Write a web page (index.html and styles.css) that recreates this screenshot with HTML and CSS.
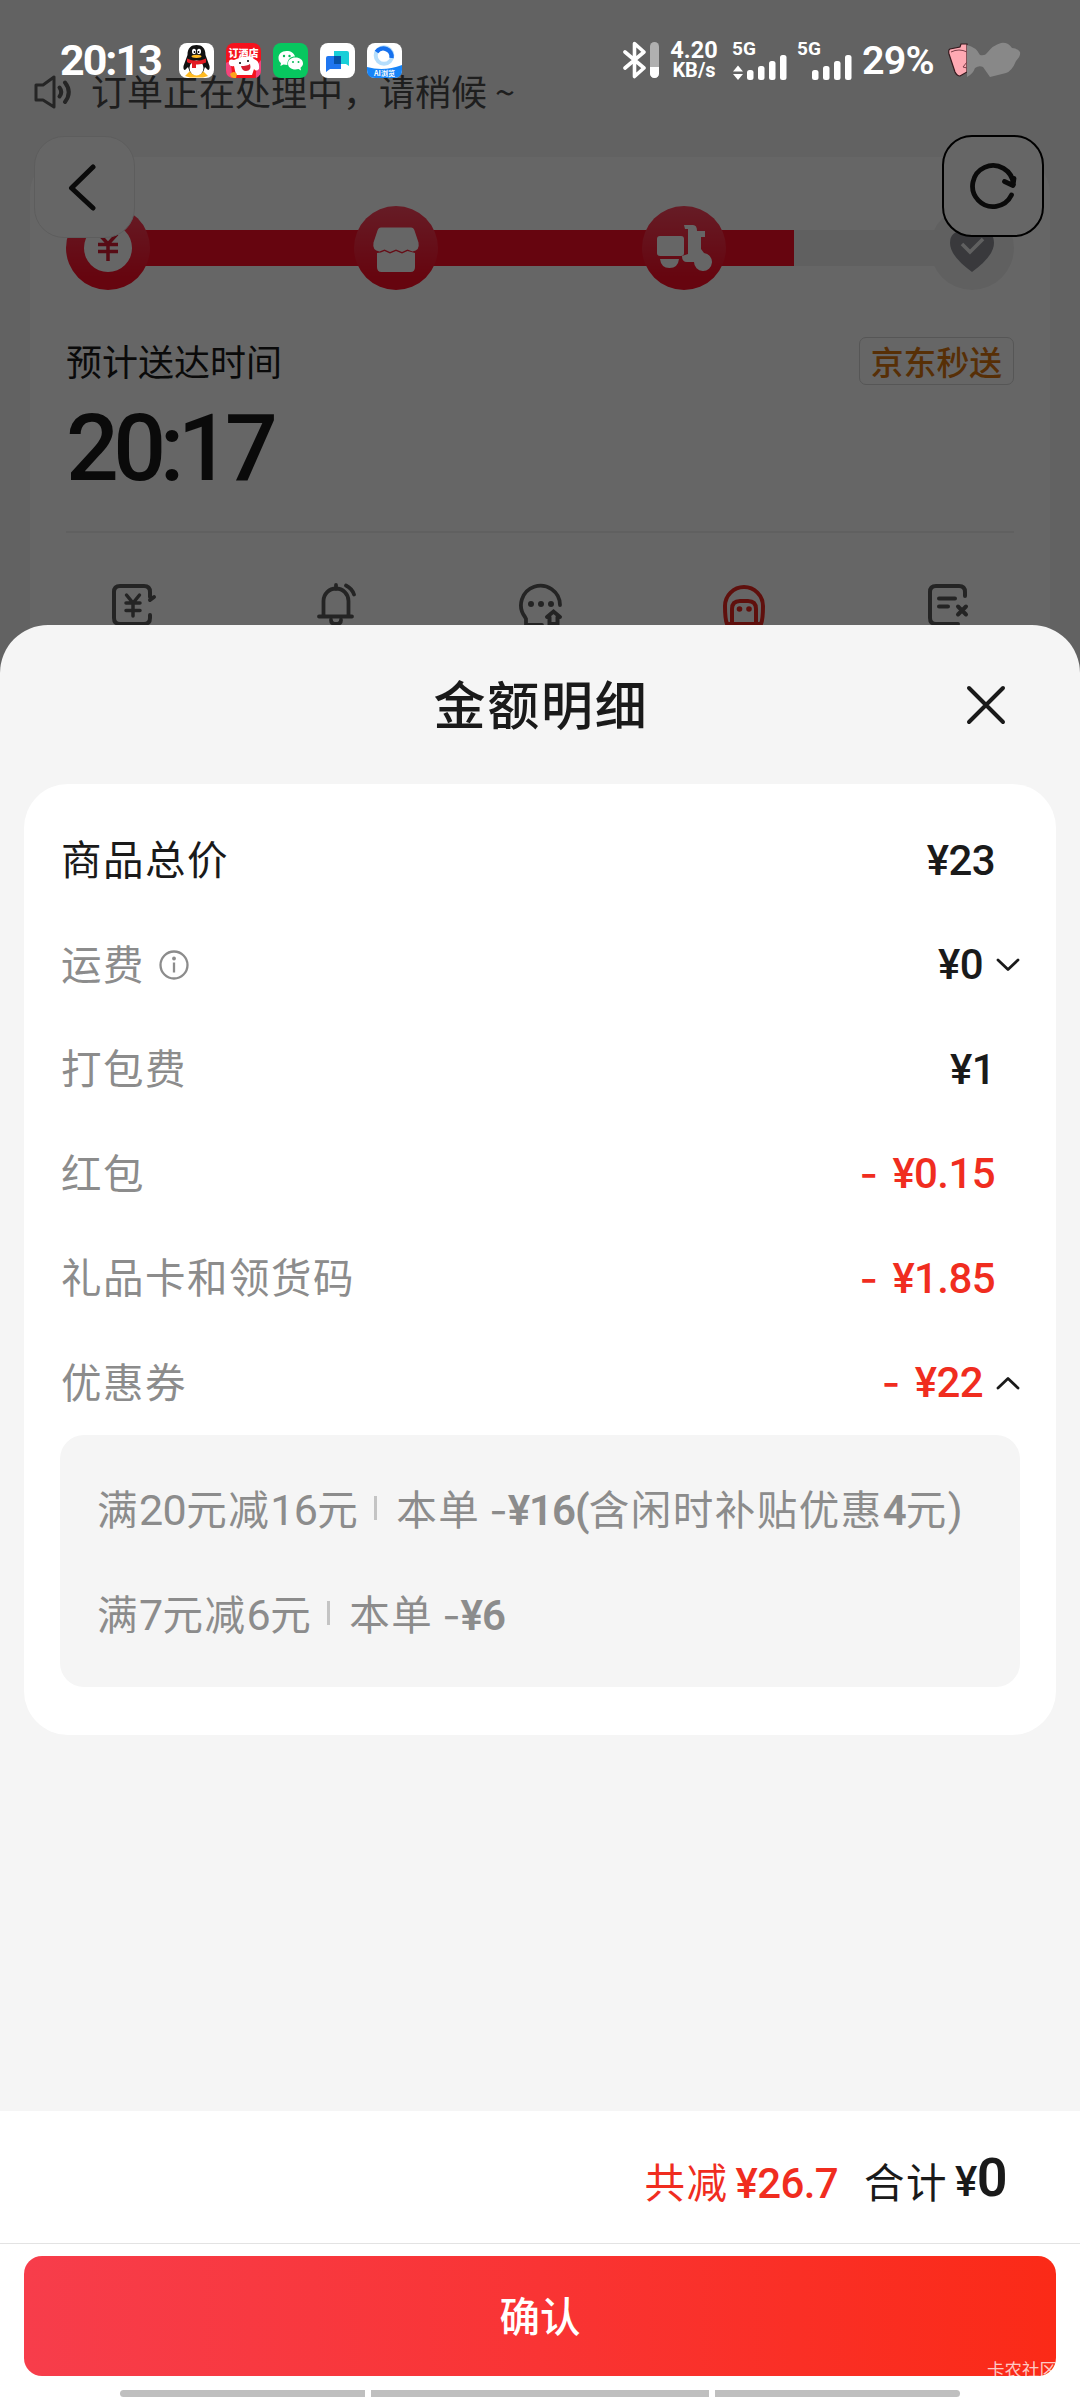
FILE: index.html
```html
<!DOCTYPE html>
<html lang="zh-CN">
<head>
<meta charset="utf-8">
<title>金额明细</title>
<link rel="stylesheet" href="styles.css">
</head>
<body>
<div class="screen">

  <main class="order">
    <div class="notice">
      <svg class="notice-icon" width="40" height="34" viewBox="0 0 40 34" fill="none" stroke="#5c5c5c" stroke-width="3" stroke-linejoin="round" stroke-linecap="round"><path d="M2 10h7l11-8v30l-11-7H2z"/><path d="M25.500 12.500q3.500 4.500 0 9" stroke-width="4"/><path d="M31 7.500q7.500 9.500 0 19.500" stroke-width="4"/></svg>
      <span>订单正在处理中，请稍候 ~</span>
    </div>

    <section class="order-card">
      <div class="steps">
        <div class="step">
          <svg width="84" height="84" viewBox="0 0 84 84"><circle cx="42" cy="42" r="24" fill="#fff"/><path d="M33 28l9 10 9-10M32 38.500h20M32 45.500h20M42 38v17" fill="none" stroke="#d91c33" stroke-width="3.500"/></svg>
        </div>
        <div class="step">
          <svg width="84" height="84" viewBox="0 0 84 84" fill="#fff"><path d="M27 21.500h30q2.500 0 3.500 3l4 12q1.500 8-6 9l-5-2-5.500 2.500-6-2.500-6 2.500-5.500-2.500-5 2q-7.500-1-6-9l4-12q1-3 3.500-3z"/><path d="M23 47q4 0 7.500-2l5.500 2.500 6-2.500 6 2.500 5.500-2.500 7.500 2v14q0 5-4.500 5H27.500q-4.500 0-4.500-5z"/></svg>
        </div>
        <div class="step">
          <svg width="84" height="84" viewBox="0 0 84 84" fill="#fff"><rect x="15" y="30" width="27" height="20" rx="3"/><path d="M18 53h19q-1 9-9.500 9T18 53z"/><path d="M42 19h9q4 0 4 6h8v6h-4v12l3 4a9 9 0 1 1-10 9H45q-5 0-5-6l6-2V23h-3z"/></svg>
        </div>
        <div class="step step-pending">
          <svg width="84" height="84" viewBox="0 0 84 84"><path d="M42 66Q20 50 20 37q0-12 13-12h18q13 0 13 12 0 13-22 29z" fill="#8e9097"/><path d="M32 38l8 8 13-13" fill="none" stroke="#f1f1f1" stroke-width="3.500"/></svg>
        </div>
      </div>

      <div class="eta-head">
        <span class="eta-label">预计送达时间</span>
        <span class="eta-badge">京东秒送</span>
      </div>
      <div class="eta-time">20<span class="colon">:</span>17</div>

      <div class="actions">
        <svg width="48" height="46" viewBox="0 0 48 46" fill="none" stroke="#5b5b5b" stroke-width="4" stroke-linecap="round"><path d="M41 14V9q0-6-6-6H11Q5 3 5 9v26q0 6 6 6h24q6 0 6-6v-3"/><path d="M41 17l4-3" /><path d="M17.500 12l6.500 8 6.500-8M17 20h14M17 27.500h14M24 20v13" stroke-width="3.500"/></svg>
        <svg width="48" height="46" viewBox="0 0 48 46" fill="none" stroke="#5b5b5b" stroke-width="3.800" stroke-linecap="round"><path d="M6 33.500h33M10.500 33V18a12 12 0 0 1 25 0v15M23 2v4M18 37q0 4 5 4t5-4M33 2.500q6 3 8 9"/></svg>
        <svg width="48" height="46" viewBox="0 0 48 46" fill="none" stroke="#5b5b5b" stroke-width="3.800" stroke-linecap="round"><path d="M43 22A19.500 19.500 0 1 0 8 34l1 2v6h16"/><path d="M30 34l6.500-5.500L43 34M32.500 34v7h8v-7" stroke-width="4"/><g fill="#5b5b5b" stroke="none"><circle cx="14" cy="21" r="3"/><circle cx="24" cy="21" r="3"/><circle cx="34" cy="21" r="3"/></g></svg>
        <svg width="48" height="46" viewBox="0 0 48 46" fill="none" stroke="#ee2a22" stroke-width="4" stroke-linecap="round"><path d="M6 41Q4 36 4 23a19 19 0 0 1 38 0q0 13-2 18z"/><path d="M11 40V26q0-8 8-8h8q8 0 8 8v14"/><g fill="#ee2a22" stroke="none"><circle cx="18.500" cy="26" r="2.800"/><circle cx="28" cy="26" r="2.800"/></g></svg>
        <svg width="48" height="46" viewBox="0 0 48 46" fill="none" stroke="#5b5b5b" stroke-width="4" stroke-linecap="round"><path d="M40 13V9q0-6-6-6H11Q5 3 5 9v26q0 6 6 6h22"/><path d="M14 15.500h16M14 23.500h9M33 23.500l8 8M41 23.500l-8 8"/></svg>
      </div>
    </section>
  </main>

  <div class="nav-button nav-back">
    <svg width="30" height="50" viewBox="0 0 30 50" fill="none" stroke="#1a1a1a" stroke-width="5" stroke-linecap="round" stroke-linejoin="round"><path d="M25 5L3.500 26 25 46"/></svg>
  </div>
  <div class="nav-button nav-refresh">
    <svg width="50" height="50" viewBox="0 0 50 50" fill="none" stroke="#1a1a1a" stroke-width="4.800" stroke-linecap="round" stroke-linejoin="round"><path d="M43.500 34A20.500 20.500 0 1 1 45.500 23.500M36.500 20.500l8.500 4 1-7"/></svg>
  </div>

  <div class="mask"></div>

  <header class="status">
    <div class="status-left">
      <span class="clock">20:13</span>
      <svg width="35" height="35" viewBox="0 0 35 35"><rect width="35" height="35" rx="8" fill="#fff"/><path d="M6 33l5-5h13l5 5-5 1.500H11z" fill="#fb2"/><path d="M8.500 12C8.500 5 12 2 17.500 2s9 3 9 10l4 11q.5 4-1.500 4l-3-3q-2 8-8.500 8T9 24l-3 3q-2 0-1.500-4z" fill="#111"/><ellipse cx="17.500" cy="25" rx="7" ry="7.500" fill="#fff"/><path d="M8 15.500q9.500 4.500 19 0v4q-5 2.500-10 2v3.500h-4v-4.500q-4-.5-5-1.500z" fill="#e31b23"/><ellipse cx="15" cy="8.500" rx="2" ry="2.800" fill="#fff"/><ellipse cx="20" cy="8.500" rx="2" ry="2.800" fill="#fff"/><circle cx="15.500" cy="9" r=".9"/><circle cx="19.500" cy="9" r=".9"/><ellipse cx="17.500" cy="13.300" rx="5" ry="1.600" fill="#fb2"/></svg>
      <svg width="35" height="35" viewBox="0 0 35 35"><rect width="35" height="35" rx="8" fill="#f5121d"/><path d="M0 20q6-5 6 15H8q-8 0-8-8zM35 17q-6 6-5 18 5-2 5-8z" fill="#f2457d"/><path d="M3 21q-1-6 5-4l5-2q3-2 8-1 4-2 7 2 6 2 5 10-3 3-5 0l-2 6H10L8 23q-4 1-5-2z" fill="#fff"/><text x="17.500" y="14" class="tile-promo" text-anchor="middle">订酒店</text><path d="M15 23q6 0 9-2 2 7-4 7-4 0-5-5z" fill="#d51f31"/><circle cx="14" cy="20" r="1"/><circle cx="22" cy="18" r="1"/><path d="M4 31q4-4 7 0l-1 4H8q-3 0-4-4z" fill="#fca51c"/></svg>
      <svg width="35" height="35" viewBox="0 0 35 35"><rect width="35" height="35" rx="8" fill="#07c75f"/><path d="M13.500 8C8.500 8 5.500 11 5.500 15c0 2.500 1 4 2.500 5l-.6 3 3-1.500 4 .5C14 16 18 13.500 22 13.500 21 10 18 8 13.500 8z" fill="#fff"/><path d="M22.500 14.500c-4.500 0-7.500 2.500-7.500 6s3 6 7.500 6l3-.6 2.500 1.600-.5-2.800c1.600-1 2.500-2.500 2.500-4.200 0-3.500-3-6-7.500-6z" fill="#fff"/><g fill="#07b857"><circle cx="11" cy="13" r="1.200"/><circle cx="16.500" cy="13" r="1.200"/><circle cx="20" cy="19" r="1"/><circle cx="25.500" cy="19" r="1"/></g></svg>
      <svg width="35" height="35" viewBox="0 0 35 35"><rect width="35" height="35" rx="8" fill="#fff"/><path d="M14 8h13q2 0 2 2v13l-3-2H14z" fill="#18cfd8"/><path d="M8 13h13v13H10l-4 3V15q0-2 2-2z" fill="#1f76f0"/><path d="M14 13h7v8h-7z" fill="#0752a8"/></svg>
      <svg width="35" height="35" viewBox="0 0 35 35"><rect width="35" height="35" rx="8" fill="#fff"/><path d="M0 24q17 5 35-2v5q0 8-8 8H8q-8 0-8-8z" fill="#1684f8"/><circle cx="17" cy="12.500" r="8.300" fill="none" stroke="#b5defc" stroke-width="4"/><path d="M9.500 9A8.300 8.300 0 0 1 24.500 15" fill="none" stroke="#1671ee" stroke-width="4.500"/><text x="17.500" y="33" class="tile-ai" text-anchor="middle">AI浏览</text></svg>
    </div>
    <div class="status-right">
      <svg width="38" height="38" viewBox="0 0 38 38"><path d="M3 11l19 16-9.500 8.500V2.500L22 11 3 27" fill="none" stroke="#fff" stroke-width="3.600" stroke-linejoin="round" stroke-linecap="round"/><rect x="28" y="1" width="9" height="36" rx="4.500" fill="#b0b0b0"/><path d="M28 26h9v6.500a4.500 4.500 0 0 1-9 0z" fill="#fff"/></svg>
      <div class="rate"><span>4.20</span><span>KB/s</span></div>
      <div class="signal">
        <span class="signal-label">5G</span>
        <svg width="56" height="26" viewBox="0 0 56 26" fill="#fff"><path d="M6 11.500l5 6H1zM6 26l-5-6h10z"/><rect x="15" y="16" width="6.500" height="10" rx="2.500"/><rect x="26" y="12" width="6.500" height="14" rx="2.500"/><rect x="37" y="7" width="6.500" height="19" rx="2.500"/><rect x="48" y="1" width="6.500" height="25" rx="2.500"/></svg>
      </div>
      <div class="signal">
        <span class="signal-label">5G</span>
        <svg width="56" height="26" viewBox="0 0 56 26" fill="#fff"><rect x="15" y="16" width="6.500" height="10" rx="2.500"/><rect x="26" y="12" width="6.500" height="14" rx="2.500"/><rect x="37" y="7" width="6.500" height="19" rx="2.500"/><rect x="48" y="1" width="6.500" height="25" rx="2.500"/></svg>
      </div>
      <span class="percent">29%</span>
      <svg class="battery" width="74" height="36" viewBox="0 0 74 36"><path d="M20 2L14 2l-1 3-10 2q-2 1-1 5l6 18q2 4 5 4l7-4z" fill="#ffa9b3" stroke="#33191d" stroke-width="1.200"/><path d="M4 10q8-4 16 0M20 20l-4 5 4 1" fill="none" stroke="#7c3f49" stroke-width="1"/><path d="M20 3q9 2 13 10 5 1 7-2 6-8 14-10 7-1 11 5 5 0 8 4 1 4-4 9-4 10-10 12l-16 4-7-10q-4-2-8 1-2 6-8 9z" fill="#888"/></svg>
    </div>
  </header>

  <section class="sheet">
    <div class="sheet-head">
      <h1>金额明细</h1>
      <svg class="close" width="44" height="44" viewBox="0 0 44 44" fill="none" stroke="#1a1a1a" stroke-width="4" stroke-linecap="round"><path d="M5 5l34 34M39 5L5 39"/></svg>
    </div>

    <div class="fees">
      <div class="row"><span class="name name-dark">商品总价</span><span class="price">¥23</span></div>
      <div class="row">
        <span class="name">运费</span>
        <svg class="info" width="30" height="30" viewBox="0 0 30 30" fill="none" stroke="#8c8c8c" stroke-width="2.300"><circle cx="15" cy="15" r="13.500"/><path d="M15 12.500v10"/><circle cx="15" cy="8.500" r="1.900" fill="#8c8c8c" stroke="none"/></svg>
        <span class="price">¥0</span>
        <svg class="chevron" width="24" height="14" viewBox="0 0 24 14" fill="none" stroke="#1a1a1a" stroke-width="2.800" stroke-linecap="round" stroke-linejoin="round"><path d="M2 2l10 9.500L22 2"/></svg>
      </div>
      <div class="row"><span class="name">打包费</span><span class="price">¥1</span></div>
      <div class="row"><span class="name">红包</span><span class="price price-off"><span class="minus">-</span>¥0.15</span></div>
      <div class="row"><span class="name">礼品卡和领货码</span><span class="price price-off"><span class="minus">-</span>¥1.85</span></div>
      <div class="row">
        <span class="name">优惠券</span><span class="price price-off"><span class="minus">-</span>¥22</span>
        <svg class="chevron" width="24" height="14" viewBox="0 0 24 14" fill="none" stroke="#1a1a1a" stroke-width="2.800" stroke-linecap="round" stroke-linejoin="round"><path d="M2 12l10-9.500L22 12"/></svg>
      </div>
      <div class="coupons">
        <div class="coupon"><span>满<span class="n">20</span>元减<span class="n">16</span>元</span><i class="bar"></i><span>本单</span><span class="cut"><span class="dash">-</span><b>¥16(</b>含闲时补贴优惠<b>4</b>元<span class="n">)</span></span></div>
        <div class="coupon"><span>满<span class="n">7</span>元减<span class="n">6</span>元</span><i class="bar"></i><span>本单</span><span class="cut"><span class="dash">-</span><b>¥6</b></span></div>
      </div>
    </div>

    <footer class="footer">
      <div class="totals">
        <span class="saved">共减</span><span class="saved saved-num">¥26.7</span>
        <span class="total">合计</span><span class="total-num">¥<b>0</b></span>
      </div>
      <div class="confirm-area">
        <button class="confirm">确认</button>
        <div class="home-bars"><i></i><i></i><i></i></div>
      </div>
    </footer>
  </section>

  <span class="watermark">卡农社区</span>
</div>
</body>
</html>
```

FILE: styles.css
```css
* { box-sizing: border-box; }

body {
  margin: 0;
  font-family: "Noto Sans CJK SC", sans-serif;
  color: #1a1a1a;
}

svg { display: block; flex: none; }
i { font-style: normal; }

.screen {
  position: relative;
  width: 1080px;
  height: 2400px;
  overflow: hidden;
  background: #f4f4f4;
}

/* order page under the mask */
.order { padding-top: 68px; }

.notice {
  display: flex;
  align-items: center;
  height: 48px;
  padding-left: 34px;
  gap: 17px;
  font-size: 36px;
  line-height: 48px;
  color: #4d4d4d;
  white-space: pre;
}

.notice span { padding-bottom: 4px; }

.order-card {
  margin: 41px 30px 0;
  height: 600px;
  padding: 49px 36px 0;
  border-radius: 36px;
  background: #fff;
}

.steps {
  display: flex;
  justify-content: space-between;
  height: 84px;
  background:
    linear-gradient(#ff0d26, #ff0d26) 42px 24px / 686px 36px no-repeat,
    linear-gradient(#f1f1f1, #f1f1f1) 42px 24px / 864px 36px no-repeat;
}

.step {
  width: 84px;
  height: 84px;
  border-radius: 50%;
  background: linear-gradient(#ff475f, #ff0d26 85%);
}

.step-pending { background: #f1f1f1; }

.eta-head {
  display: flex;
  justify-content: space-between;
  align-items: center;
  height: 48px;
  margin-top: 47px;
}

.eta-label { padding-bottom: 3px; font-size: 36px; line-height: 48px; }

.eta-badge {
  height: 48px;
  padding: 0 11px;
  border: 1px solid #d6d6d6;
  border-radius: 7px;
  font-size: 32.800px;
  font-weight: 500;
  line-height: 45px;
  color: #d9750f;
}

.eta-time {
  margin-top: 15px;
  height: 133px;
  padding-top: 3px;
  border-bottom: 2px solid #efefef;
  font: 500 93px/92px Roboto, sans-serif;
  letter-spacing: -5.500px;
}

.colon { margin: 0 -1px 0 -1px; }

.actions {
  display: flex;
  justify-content: space-between;
  padding: 50px 41px 0 43px;
}

.nav-button {
  position: absolute;
  top: 136px;
  display: flex;
  align-items: center;
  justify-content: center;
  width: 101px;
  height: 102px;
  border-radius: 30px;
  background: #fff;
}

.nav-back { left: 34px; border: 1px solid #e8e8e8; }
.nav-back svg { margin-right: 4px; }
.nav-refresh { left: 942px; top: 135px; width: 102px; border: 2px solid #000; }

.mask { position: absolute; inset: 0; background: rgba(0, 0, 0, .6); }

/* system status bar */
.status {
  position: absolute;
  top: 40px;
  left: 0;
  right: 0;
  height: 40px;
  padding: 0 59px 0 60px;
  display: flex;
  justify-content: space-between;
  color: #fff;
  font-family: Roboto, sans-serif;
  font-weight: 700;
}

.status-left, .status-right { display: flex; align-items: center; }
.status-left { gap: 12px; }

.clock {
  width: 107px;
  font-size: 43px;
  line-height: 40px;
  letter-spacing: -2px;
}

.tile-promo { font: 900 10px "Noto Sans CJK SC", sans-serif; fill: #fff; }
.tile-ai { font: 700 7px "Noto Sans CJK SC", sans-serif; fill: #fff; }

.rate {
  display: flex;
  flex-direction: column;
  align-items: center;
  width: 48px;
  margin-left: 10px;
  font-size: 23.500px;
  line-height: 20px;
}

.rate span:last-child { font-size: 20px; }

.signal {
  display: flex;
  flex-direction: column;
  width: 56px;
  height: 39px;
  margin-left: 14px;
}

.signal + .signal { margin-left: 9px; }
.signal-label { height: 13px; font-size: 19px; line-height: 16px; }

.percent {
  width: 78px;
  margin-left: 9px;
  font-size: 39.500px;
  font-weight: 600;
  letter-spacing: -.8px;
}

.battery { margin-left: 7px; }

/* bottom sheet */
.sheet {
  position: absolute;
  top: 625px;
  left: 0;
  right: 0;
  bottom: 0;
  display: flex;
  flex-direction: column;
  border-radius: 48px 48px 0 0;
  overflow: hidden;
  background: #f5f5f5;
}

.sheet-head {
  display: grid;
  grid-template-columns: 1fr auto 1fr;
  align-items: center;
  height: 159px;
  padding: 0 72px;
}

.sheet-head h1 {
  grid-column: 2;
  margin: 0;
  padding: 0 0 4px 2px;
  font-size: 52px;
  font-weight: 500;
  line-height: 60px;
  letter-spacing: 1.700px;
}

.close { justify-self: end; }

.fees {
  margin: 0 24px;
  height: 951px;
  padding: 24px 36px 0;
  border-radius: 44px;
  background: #fff;
}

.row {
  display: flex;
  align-items: center;
  height: 104.500px;
}

.name {
  padding: 0 0 4px 1px;
  font-size: 40.500px;
  line-height: 60px;
  letter-spacing: 1.500px;
  color: #8c8c8c;
}

.name-dark { color: #1a1a1a; }
.info { margin-left: 14px; }

.price {
  display: flex;
  align-items: center;
  margin-left: auto;
  margin-right: 25px;
  padding-top: 1px;
  font: 500 42px/50px Roboto, sans-serif;
  letter-spacing: -.6px;
}

.price-off { color: #f02d1f; }
.price:has(+ .chevron) { margin-right: 13px; }

.minus {
  margin-right: 15px;
  font-family: Inter, sans-serif;
  font-size: 40px;
}

.coupons {
  height: 252px;
  padding: 21px 36px;
  border-radius: 24px;
  background: #f5f5f5;
}

.coupon {
  display: flex;
  align-items: center;
  height: 105px;
  padding: 0 0 3px 1px;
  font-size: 40.500px;
  letter-spacing: 1.500px;
  color: #8c8c8c;
  white-space: nowrap;
}

.coupon .n, .coupon b { font-family: Roboto, sans-serif; letter-spacing: -.6px; }
.coupon .n { font-size: 43px; }
.coupon b { font-size: 42px; font-weight: 600; letter-spacing: -1px; }
.dash { font-family: Inter, sans-serif; font-size: 40px; letter-spacing: 0; }
.bar { width: 3px; height: 24px; margin: 2px 19px 0 15px; background: #c4c4c4; }
.cut { margin-left: 9px; }

.footer { margin-top: auto; height: 289px; background: #fff; }

.totals {
  display: flex;
  align-items: center;
  justify-content: flex-end;
  height: 133px;
  padding: 6px 73px 0 0;
  border-bottom: 1px solid #e3e3e3;
  font-size: 40.500px;
  letter-spacing: 1.500px;
}

.saved { color: #f02d1f; }
.saved-num, .total-num { font: 500 42px/50px Roboto, sans-serif; letter-spacing: -.6px; margin-left: 7px; }
.saved-num { padding-top: 7px; }
.total { margin-left: 26px; }
.total-num b { font-size: 54px; font-weight: 600; }

.confirm-area {
  display: flex;
  flex-direction: column;
  align-items: center;
  gap: 14px;
  padding: 12px 24px 0;
}

.confirm {
  width: 100%;
  height: 120px;
  padding: 0 0 3px;
  border: 0;
  border-radius: 18px;
  background: linear-gradient(90deg, #f73d4b, #f93434 50%, #fb2a17);
  color: #fff;
  font: 500 40.500px/60px "Noto Sans CJK SC", sans-serif;
}

.home-bars { display: grid; grid-template-columns: 245px 338px 245px; gap: 6px; }
.home-bars i { height: 7px; background: #bfbfbf; }
.home-bars i:first-child { border-radius: 4px 0 0 4px; }
.home-bars i:last-child { border-radius: 0 4px 4px 0; }

.watermark {
  position: absolute;
  left: 987px;
  top: 2356px;
  font-size: 17.500px;
  line-height: 26px;
  color: rgba(255, 255, 255, .75);
}
```
